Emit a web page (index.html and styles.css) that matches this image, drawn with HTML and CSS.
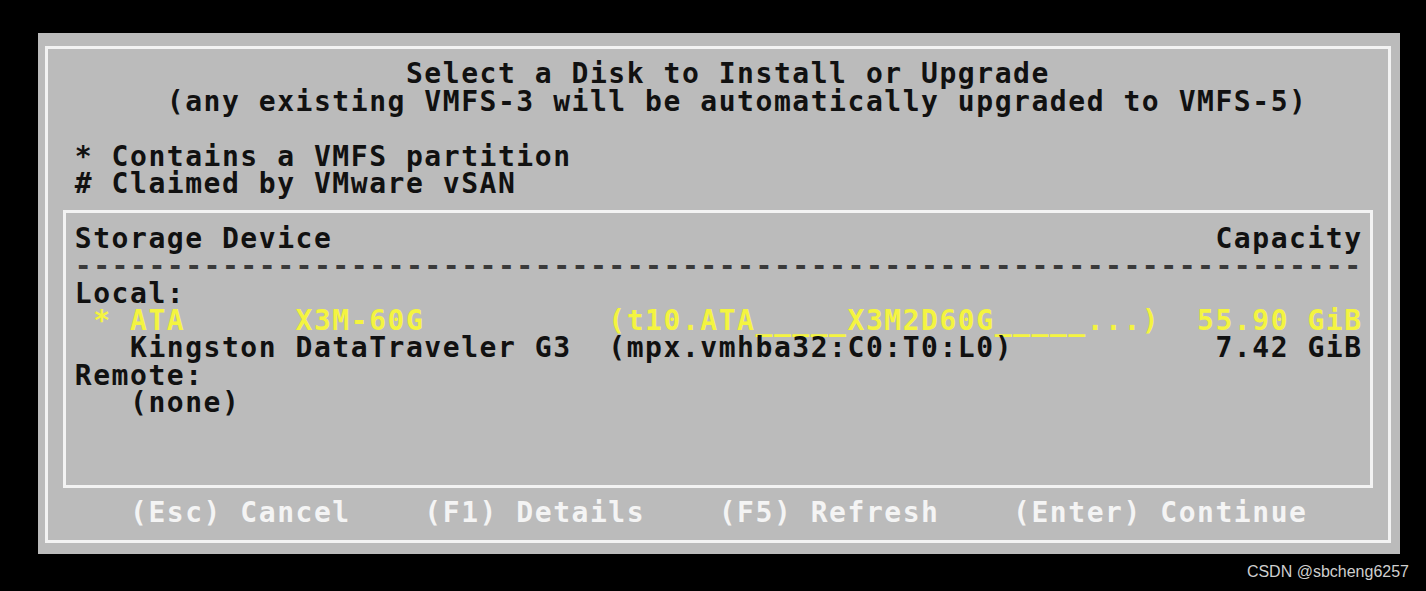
FILE: index.html
```html
<!DOCTYPE html>
<html>
<head>
<meta charset="utf-8">
<link rel="stylesheet" href="styles.css">
</head>
<body>
<div class="screen">
  <div class="panel">
    <div class="frame"></div>
    <div class="box"></div>
    <div class="text">
      <div class="row"></div>
      <div class="row">                    Select a Disk to Install or Upgrade</div>
      <div class="row">       (any existing VMFS-3 will be automatically upgraded to VMFS-5)</div>
      <div class="row"></div>
      <div class="row">  * Contains a VMFS partition</div>
      <div class="row">  # Claimed by VMware vSAN</div>
      <div class="row"></div>
      <div class="row">  Storage Device                                                Capacity</div>
      <div class="row dash">  ----------------------------------------------------------------------</div>
      <div class="row">  Local:</div>
      <div class="row sel">   * ATA      X3M-60G          (t10.ATA_____X3M2D60G_____...)  55.90 GiB</div>
      <div class="row">     Kingston DataTraveler G3  (mpx.vmhba32:C0:T0:L0)           7.42 GiB</div>
      <div class="row">  Remote:</div>
      <div class="row">     (none)</div>
      <div class="row"></div>
      <div class="row"></div>
      <div class="row"></div>
      <div class="row keys">     (Esc) Cancel    (F1) Details    (F5) Refresh    (Enter) Continue</div>
      <div class="row"></div>
    </div>
  </div>
  <div class="watermark">CSDN @sbcheng6257</div>
</div>
</body>
</html>
```
FILE: styles.css
```css
html, body {
  margin: 0;
  background: #000;
}
body {
  width: 1426px;
  height: 591px;
  overflow: hidden;
}
.screen {
  padding: 33px 0 0 38px;
}
.panel {
  display: grid;
  width: 1361.6px;
  height: 520.6px;
  background: #bbbbbb;
}
.panel > * {
  grid-area: 1 / 1;
}
.frame {
  margin: 13px 8.6px 10.6px 7px;
  border: 3px solid #f3f3f3;
}
.box {
  margin: 177px 26.6px 65.6px 25px;
  border: 3px solid #f3f3f3;
}
.text {
  font-family: "DejaVu Sans Mono", monospace;
  font-weight: bold;
  font-size: 28px;
  letter-spacing: 1.54px;
  color: #111;
}
.row {
  height: 27.4px;
  line-height: 27.4px;
  white-space: pre;
}
.dash {
  color: #3a3a3a;
}
.sel {
  color: #f4f440;
}
.keys {
  color: #f4f4f4;
}
.watermark {
  margin-top: 8px;
  padding-right: 17px;
  text-align: right;
  font-family: "Liberation Sans", Arial, sans-serif;
  font-size: 16px;
  line-height: 20px;
  color: #cfcfcf;
}
```
